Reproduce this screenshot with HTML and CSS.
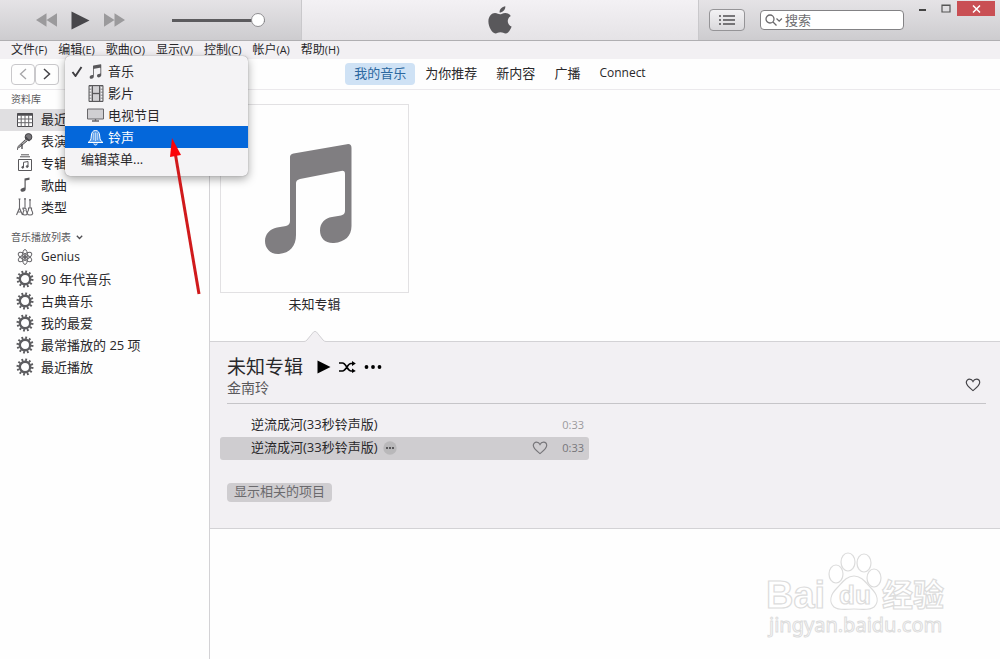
FILE: index.html
```
<!DOCTYPE html>
<html lang="zh-CN">
<head>
<meta charset="utf-8">
<title>iTunes</title>
<link rel="stylesheet" href="styles.css">
</head>
<body>
<svg class="defs" width="0" height="0" aria-hidden="true">
  <symbol id="gear" viewBox="0 0 18 18">
    <circle cx="9" cy="9" r="5.200" fill="none" stroke="#5d5d60" stroke-width="2.400"/>
    <circle cx="9" cy="9" r="7.200" fill="none" stroke="#5d5d60" stroke-width="2.600" stroke-dasharray="1.800 1.970"/>
  </symbol>
  <symbol id="heart" viewBox="0 0 16 14">
    <path d="M8 12.6C5 10.2 1.3 7.6 1.3 4.6 1.3 2.5 2.8 1.2 4.5 1.2 6 1.2 7.300 2 8 3.400 8.700 2 10 1.200 11.500 1.200c1.700 0 3.200 1.300 3.200 3.400 0 3-3.700 5.600-6.700 8z" fill="none" stroke="currentColor" stroke-width="1.2"/>
  </symbol>
  <symbol id="notes" viewBox="264 142 89 112">
    <path d="M290 156Q290 153 293.500 152.500L347 143.200Q351.500 142.500 351.500 147V225C351.500 235 345 241 334 242 325 242.500 320 237 320 229.500 320 222 325 217 332 216L341 214.500Q345 213.500 345 210V173Q345 169 341 170L300 178Q296 179 296 182V234C296 245 290 252 279 253 270 253.500 265 247 265 240 265 233 270 228 277 226.500L286 225Q290 224 290 220Z" fill="currentColor"/>
  </symbol>
</svg>

<header class="titlebar">
  <div class="transport">
    <button class="icon-btn" aria-label="后退"><svg width="21" height="14" viewBox="0 0 22 14"><path d="M11 0v14L0 7zM22 0v14L11 7z" fill="#9b9a9c"/></svg></button>
    <button class="icon-btn" aria-label="播放"><svg width="19" height="19" viewBox="0 0 19 19"><path d="M0.500 0.500l18 9-18 9z" fill="#47464a"/></svg></button>
    <button class="icon-btn" aria-label="前进"><svg width="21" height="14" viewBox="0 0 22 14"><path d="M0 0v14l11-7zM11 0v14l11-7z" fill="#9b9a9c"/></svg></button>
    <input class="volume" type="range" min="0" max="100" value="100" aria-label="音量">
  </div>
  <div class="display">
    <svg width="24" height="28" viewBox="0 0 24 28" role="img" aria-label="Apple"><path d="M17.300 0.300c.3 3.300-2.500 6.300-5.700 6.300C11.200 3.700 14 .8 17.300.3zM12 8.300c1.200 0 2.900-1.500 5.500-1.400 2.200.1 4.200 1.200 5.300 3-4.500 2.800-3.800 8.900.8 10.700-.8 2.600-3.200 6.900-5.900 6.900-2 0-2.900-1.200-5.200-1.200-2.300 0-3.300 1.200-5.100 1.200C4 27.500.4 20.600.4 15.600.4 10 3.800 7 7 7c2.200 0 3.800 1.300 5 1.300z" fill="#59585b"/></svg>
  </div>
  <div class="tools">
    <button class="list-btn" aria-label="待播清单"><svg width="16" height="10" viewBox="0 0 16 10"><path d="M0 1h2M0 5h2M0 9h2M4 1h12M4 5h12M4 9h12" stroke="#515053" stroke-width="1.400"/></svg></button>
    <label class="search">
      <svg width="18" height="12" viewBox="0 0 18 12" fill="none" stroke="#6a696c" stroke-width="1.300"><circle cx="5" cy="5" r="4"/><path d="M8 8l3.500 3.500M11.500 4.500l2.700 2.700 2.700-2.700"/></svg>
      <input type="text" placeholder="搜索" aria-label="搜索">
    </label>
    <div class="window-btns">
      <button aria-label="最小化"><svg width="9" height="10" viewBox="0 0 9 10"><path d="M1 6h7" stroke="#444" stroke-width="2"/></svg></button>
      <button aria-label="最大化"><svg width="10" height="9" viewBox="0 0 10 9"><path d="M1 1h8v7H1zM1 1.500h8" fill="none" stroke="#555" stroke-width="1.200"/></svg></button>
      <button class="close" aria-label="关闭"><svg width="9" height="8" viewBox="0 0 9 8"><path d="M1 .5l7 7M8 .5l-7 7" stroke="#fff" stroke-width="1.500"/></svg></button>
    </div>
  </div>
</header>

<nav class="menubar">
  <button>文件<span>(F)</span></button>
  <button aria-expanded="true">编辑<span>(E)</span></button>
  <button>歌曲<span>(O)</span></button>
  <button>显示<span>(V)</span></button>
  <button>控制<span>(C)</span></button>
  <button>帐户<span>(A)</span></button>
  <button>帮助<span>(H)</span></button>
  <div class="popup" role="menu">
    <button role="menuitem">
      <svg width="12" height="11" viewBox="0 0 12 11"><path d="M1.500 6l3 4L10.500 1" fill="none" stroke="#3d3c40" stroke-width="1.900"/></svg>
      <svg class="kind" width="13" height="15"><use href="#notes"/></svg>音乐</button>
    <button role="menuitem"><i></i>
      <svg class="kind" width="16" height="17" viewBox="0 0 16 17"><path d="M1 .5h14v16H1z" fill="#aaa9ac" stroke="#59585b"/><path d="M4.500 1v15M11.500 1v15M4.500 8.500h7" stroke="#59585b"/><path d="M2.500 2v14M13.500 2v14" stroke="#f4f3f5" stroke-width="1.400" stroke-dasharray="1.500 1.500"/><path d="M5 1.500h6v6H5zM5 9.500h6v6H5z" fill="#d1d0d3"/></svg>影片</button>
    <button role="menuitem"><i></i>
      <svg class="kind" width="17" height="14" viewBox="0 0 17 14"><path d="M.5 1h16v10H.5z" fill="#d0cfd2" stroke="#68676a"/><path d="M8.500 11v2M5 13h7" stroke="#68676a" stroke-width="1.300"/></svg>电视节目</button>
    <button role="menuitem" class="chosen"><i></i>
      <svg class="kind" width="17" height="17" viewBox="0 0 17 17" fill="none" stroke="#fff"><path d="M8.500 1.500C5.500 1.500 4.500 4 4.300 7 4.100 10.500 3.500 12 1 13.500h15c-2.500-1.500-3.100-3-3.300-6.500-.2-3-1.200-5.500-4.200-5.500zM6.800 14.500c.3 2 3.100 2 3.400 0" fill="#5a9de9"/><path d="M6.700 4v7M8.500 3.500V12M10.300 4v7" stroke-width=".6"/></svg>铃声</button>
    <button role="menuitem" class="plain">编辑菜单...</button>
  </div>
</nav>

<div class="toolbar">
  <div class="history">
    <button aria-label="上一页"><svg width="8" height="12" viewBox="0 0 8 12"><path d="M7 1L1.500 6 7 11" fill="none" stroke="#a5a4a7" stroke-width="1.300"/></svg></button>
    <button aria-label="下一页"><svg width="8" height="12" viewBox="0 0 8 12"><path d="M1 1l5.500 5L1 11" fill="none" stroke="#454448" stroke-width="1.500"/></svg></button>
  </div>
  <nav class="tabs">
    <a href="#" class="active">我的音乐</a>
    <a href="#">为你推荐</a>
    <a href="#">新内容</a>
    <a href="#">广播</a>
    <a href="#" class="latin">Connect</a>
  </nav>
</div>

<div class="content">
  <aside class="sidebar">
    <h2>资料库</h2>
    <ul>
      <li class="current"><a href="#"><svg width="18" height="18" viewBox="0 0 18 18"><path d="M1.500 3.500h15v13h-15z" fill="#fff" stroke="#4e4d51"/><path d="M1.500 4.500h15" stroke="#4e4d51" stroke-width="2.500"/><path d="M1.500 9h15M1.500 12.700h15M5.200 5v11.500M9 5v11.500M12.700 5v11.500" stroke="#68676b"/></svg>最近添加</a></li>
      <li><a href="#"><svg width="18" height="18" viewBox="0 0 18 18"><path d="M9.500 7.500L1.500 15l1 1L11 9" fill="#aaa" stroke="#59585b"/><circle cx="12.500" cy="5" r="3.400" fill="#77767a" stroke="#444347"/><path d="M9.500 5l4 4M6 12v5M1 17h1" stroke="#444347" stroke-width="1.300"/></svg>表演者</a></li>
      <li><a href="#"><svg width="18" height="18" viewBox="0 0 18 18" fill="none" stroke="#59585b"><path d="M5 .8h8M4 2.800h10M2.500 5.500h13v11h-13z"/><path d="M7.500 13.500V8.300L12 7.500v5" /><circle cx="6.700" cy="13.300" r=".9" fill="#59585b"/><circle cx="11.200" cy="12.500" r=".9" fill="#59585b"/></svg>专辑</a></li>
      <li><a href="#"><svg width="18" height="18" viewBox="0 0 18 18" fill="#59585b"><path d="M8.500 2.500l5-1v2.300L9.700 4.600V13c0 1.800-1.300 2.800-3 2.800-1.500 0-2.200-.8-2.200-1.800 0-1.300 1.200-1.900 2.400-2.100 1.100-.2 1.600-.3 1.600-1z"/></svg>歌曲</a></li>
      <li><a href="#"><svg width="18" height="18" viewBox="0 0 18 18" fill="none" stroke="#68676b" stroke-width="1.100"><path d="M3.500 1v9M9 0v10M14 1v9M2.500 1h2M8 1h2M13 2h2"/><path d="M3.500 10l-3 7M3.500 10l3 7M1.500 14h4M7 10q4 0 3 2.500Q12.500 17 9 17T8 12.500Q6.500 11 7 10zM12.500 10h3v2q3 5-1.500 5t-1.500-5z"/></svg>类型</a></li>
    </ul>
    <h2 class="lists">音乐播放列表 <svg width="7" height="5" viewBox="0 0 7 5"><path d="M.8.8l2.700 2.700L6.200.8" fill="none" stroke="#4f4e52" stroke-width="1.300"/></svg></h2>
    <ul>
      <li><a href="#" class="latin"><svg width="18" height="18" viewBox="0 0 18 18" fill="none" stroke="#68676b"><ellipse cx="9" cy="9" rx="2.800" ry="7.500"/><ellipse cx="9" cy="9" rx="2.800" ry="7.500" transform="rotate(60 9 9)"/><ellipse cx="9" cy="9" rx="2.800" ry="7.500" transform="rotate(120 9 9)"/><circle cx="9" cy="9" r="1.500" fill="#68676b"/></svg>Genius</a></li>
      <li><a href="#"><svg width="18" height="18"><use href="#gear"/></svg>90 年代音乐</a></li>
      <li><a href="#"><svg width="18" height="18"><use href="#gear"/></svg>古典音乐</a></li>
      <li><a href="#"><svg width="18" height="18"><use href="#gear"/></svg>我的最爱</a></li>
      <li><a href="#"><svg width="18" height="18"><use href="#gear"/></svg>最常播放的 25 项</a></li>
      <li><a href="#"><svg width="18" height="18"><use href="#gear"/></svg>最近播放</a></li>
    </ul>
  </aside>

  <main class="main">
    <figure class="album">
      <div class="cover"><svg width="89" height="112"><use href="#notes"/></svg></div>
      <figcaption>未知专辑</figcaption>
    </figure>
    <section class="details">
      <svg class="caret" width="22" height="12" viewBox="0 0 22 12"><path d="M0 12V11.500L2 10.500 9.500 2Q11 .6 12.500 2L20 10.500l2 1v.5z" fill="#f2f0f3"/><path d="M0 11.500Q2 11.500 3 10L9.500 2Q11 .6 12.500 2L19 10q1 1.500 3 1.500" fill="none" stroke="#d3d2d5"/></svg>
      <div class="head">
        <div>
          <div class="title-row">
            <h1>未知专辑</h1>
            <button class="icon-btn" aria-label="播放专辑"><svg width="14" height="14" viewBox="0 0 14 14"><path d="M.5.500l13 6.500-13 6.500z"/></svg></button>
            <button class="icon-btn" aria-label="随机播放"><svg width="17" height="12" viewBox="0 0 17 12"><path d="M0 2h3.500C7 2 8.500 10 12 10h2M0 10h3.500C7 10 8.500 2.500 12 2.500h2" fill="none" stroke="#000" stroke-width="1.700"/><path d="M13 0l3.800 2.500L13 5zM13 7.500l3.800 2.500L13 12z"/></svg></button>
            <button class="icon-btn" aria-label="更多"><svg width="18" height="4" viewBox="0 0 18 4"><circle cx="2.500" cy="2" r="1.900"/><circle cx="9" cy="2" r="1.900"/><circle cx="15.500" cy="2" r="1.900"/></svg></button>
          </div>
          <p class="artist">金南玲</p>
        </div>
        <button class="icon-btn love" aria-label="喜爱"><svg width="16" height="14"><use href="#heart"/></svg></button>
      </div>
      <table class="tracks">
        <tbody>
          <tr><td class="name">逆流成河(33秒铃声版)</td><td class="fav"></td><td class="time">0:33</td></tr>
          <tr class="selected">
            <td class="name"><span>逆流成河(33秒铃声版)<button class="icon-btn" aria-label="歌曲选项"><svg width="14" height="14" viewBox="0 0 14 14"><circle cx="7" cy="7" r="6.700" fill="#b9b8ba"/><path d="M3 7h2M6 7h2M9 7h2" stroke="#59585b" stroke-width="2"/></svg></button></span></td>
            <td class="fav"><button class="icon-btn" aria-label="喜爱歌曲"><svg width="16" height="14"><use href="#heart"/></svg></button></td>
            <td class="time">0:33</td>
          </tr>
        </tbody>
      </table>
      <button class="related">显示相关的项目</button>
    </section>
  </main>
</div>

<svg class="arrow" width="40" height="158" viewBox="0 0 40 158" aria-hidden="true"><path d="M33 156L9 14" stroke="#d01a1c" stroke-width="3"/><path d="M6 0l9 17-11 2z" fill="#fb0208"/></svg>

<svg class="watermark" width="184" height="92" viewBox="0 0 184 92" role="img" aria-label="Baidu 经验">
  <g fill="#fff" stroke="#dcdcdc" stroke-width="1.200">
    <ellipse cx="70" cy="25" rx="7" ry="9"/><ellipse cx="82" cy="13" rx="7" ry="9"/><ellipse cx="98" cy="14" rx="7" ry="9"/><ellipse cx="108" cy="29" rx="7" ry="9"/>
    <path d="M88 27c8 0 12 7 17 12 7 7 8 14 3 19-5 4-13 2-20 2s-15 2-20-2c-5-5-4-12 3-19 5-5 9-12 17-12z"/>
    <text class="wm-brand" x="0" y="59">Bai</text>
    <text class="wm-du" x="73" y="55">du</text>
    <text class="wm-cn" x="116" y="57">经验</text>
    <text class="wm-url" x="3" y="83">jingyan.baidu.com</text>
  </g>
</svg>
</body>
</html>
```
FILE: styles.css
```
* { box-sizing: border-box; }

body {
  position: relative;
  display: flex;
  flex-direction: column;
  min-height: 100vh;
  margin: 0;
  background: #fefefe;
  color: #29282b;
  font: 13px/22px "Open Sans", "Noto Sans CJK SC", sans-serif;
}

button, input { font: inherit; color: inherit; }
button { margin: 0; padding: 0; border: 0; background: none; }
svg { display: block; flex: none; }
a { color: inherit; text-decoration: none; }
h1, h2, p, ul, figure { margin: 0; padding: 0; font-weight: 400; }
ul { list-style: none; }
.defs { position: absolute; }
.latin { font-size: 12px; }
.icon-btn { display: flex; }

.titlebar {
  display: grid;
  grid-template-columns: 301px 1fr 301px;
  height: 41px;
  border-bottom: 1px solid #b0afb2;
  background: linear-gradient(#e5e3e6, #cdcccf);
}
.transport { display: flex; align-items: center; gap: 14px; padding-left: 36px; }
.volume {
  width: 93px;
  height: 14px;
  margin: 0 0 0 33px;
  appearance: none;
  background: linear-gradient(#5c5b5e, #5c5b5e) center / 100% 3px no-repeat;
}
.volume::-webkit-slider-thumb {
  appearance: none;
  width: 14px;
  height: 14px;
  border: 1px solid #8f8e91;
  border-radius: 50%;
  background: #fff;
}
.display {
  display: flex;
  align-items: center;
  justify-content: center;
  border: solid #c9c8cb;
  border-width: 0 1px;
  background: linear-gradient(#f3f1f4, #e5e3e6);
}
.tools { display: flex; align-items: center; padding: 0 5px 0 10px; }
.list-btn {
  display: flex;
  align-items: center;
  justify-content: center;
  width: 36px;
  height: 22px;
  border: 1px solid #959497;
  border-radius: 4px;
  background: linear-gradient(#f3f2f4, #dad9dc);
}
.search {
  display: flex;
  align-items: center;
  gap: 2px;
  width: 144px;
  height: 20px;
  margin-left: 15px;
  padding-left: 4px;
  border: 1px solid #838285;
  border-radius: 4px;
  background: #fff;
}
.search input { width: 100%; height: 18px; padding: 0; border: 0; background: none; outline: 0; }
.search input::placeholder { color: #6e6d70; }
.window-btns { display: flex; align-self: flex-start; margin-left: auto; padding-top: 1px; }
.window-btns button {
  display: flex;
  align-items: center;
  justify-content: center;
  width: 23px;
  height: 15px;
}
.window-btns .close { width: 38px; background: #c94f54; }

.menubar {
  position: relative;
  display: flex;
  gap: 11px;
  height: 18px;
  padding-left: 11px;
  background: #f2f0f3;
  font-size: 12px;
}
.menubar > button { line-height: 18px; }
.menubar span { font-size: 11px; }

.popup {
  position: absolute;
  z-index: 2;
  top: 15px;
  left: 65px;
  width: 183px;
  padding: 4px 0 6px;
  border-radius: 5px;
  background: #f4f3f5;
  box-shadow: 0 0 1px #777, 0 3px 10px rgba(0, 0, 0, .35);
  font-size: 13px;
}
.popup button {
  display: grid;
  grid-template-columns: 12px 17px 1fr;
  align-items: center;
  column-gap: 4px;
  width: 100%;
  height: 22px;
  padding-left: 6px;
  line-height: 22px;
  text-align: left;
}
.popup .kind { justify-self: center; color: #59585b; }
.popup .chosen { background: #0467da; color: #fff; }
.popup .plain { display: block; padding-left: 16px; }

.toolbar {
  display: grid;
  grid-template-columns: 1fr auto 1fr;
  align-items: center;
  height: 31px;
  padding: 0 0 0 11px;
  border-bottom: 1px solid #ebe9ec;
}
.history { display: flex; margin-right: 11px; }
.history button {
  display: flex;
  align-items: center;
  justify-content: center;
  width: 24px;
  height: 21px;
  border: 1px solid #c9c8cb;
  border-radius: 4px;
}
.tabs { display: flex; gap: 1px; margin-left: -11px; }
.tabs a { padding: 0 9px 2px; border-radius: 4px; line-height: 20px; }
.tabs .active { background: #cfe2f5; color: #2c689f; }

.content { display: flex; flex: 1; }
.sidebar { width: 210px; flex: none; border-right: 1px solid #d3d2d5; }
.sidebar h2 {
  display: flex;
  align-items: center;
  gap: 5px;
  padding-left: 11px;
  color: #59585b;
  font-size: 10px;
  line-height: 19px;
}
.sidebar .lists { margin-top: 9px; }
.sidebar a {
  display: flex;
  align-items: center;
  gap: 7px;
  padding: 0 0 2px 16px;
  line-height: 20px;
}
.sidebar .current { background: #e0dfe1; }

.main { flex: 1; min-width: 0; padding-top: 14px; }
.album { width: 189px; margin-left: 10px; text-align: center; }
.cover {
  display: flex;
  align-items: center;
  justify-content: center;
  height: 189px;
  padding-right: 12px;
  border: 1px solid #e2e1e3;
  color: #807e81;
}
.album figcaption { padding-bottom: 2px; }

.details {
  position: relative;
  margin-top: 24px;
  padding: 12px 14px 26px 17px;
  border: solid #d3d2d5;
  border-width: 1px 0;
  background: #f2f0f3;
}
.caret { position: absolute; top: -12px; left: 94px; }
.head {
  display: flex;
  justify-content: space-between;
  padding-bottom: 7px;
  border-bottom: 1px solid #c6c5c8;
}
.title-row { display: flex; align-items: center; gap: 8px; }
.title-row h1 { margin-right: 6px; font-size: 19px; line-height: 26px; }
.artist { color: #59585b; font-size: 14px; line-height: 16px; }
.love { align-self: flex-end; padding: 0 5px 4px 0; color: #454448; }
.tracks { width: 369px; margin: 10px 0 0 -7px; border-spacing: 0; line-height: 21px; }
.tracks td { height: 23px; padding: 0 0 2px; }
.tracks .name { padding-left: 31px; }
.tracks .name span { display: flex; align-items: center; gap: 5px; }
.tracks .fav { width: 30px; color: #77767a; }
.tracks .time { width: 27px; padding-right: 5px; color: #9b9a9d; font-size: 11px; text-align: right; }
.selected td { background: #cfcdd0; }
.selected td:first-child { border-radius: 3px 0 0 3px; }
.selected td:last-child { border-radius: 0 3px 3px 0; }
.tracks .selected .time { color: #77767a; }
.related {
  display: block;
  margin-top: 23px;
  padding: 0 7px 2px;
  border-radius: 4px;
  background: #cfcdd0;
  color: #6b6a6d;
  line-height: 17px;
}

.arrow { position: absolute; z-index: 3; top: 138px; left: 166px; }

.watermark { position: absolute; top: 549px; left: 766px; overflow: visible; }
.wm-brand { font: 700 38px "Liberation Sans", sans-serif; }
.wm-du { font: 700 26px "Liberation Sans", sans-serif; }
.wm-cn { font: 700 31px "Noto Sans CJK SC", sans-serif; }
.wm-url { font: 20px "Noto Sans", sans-serif; stroke-width: 1px; }
```
